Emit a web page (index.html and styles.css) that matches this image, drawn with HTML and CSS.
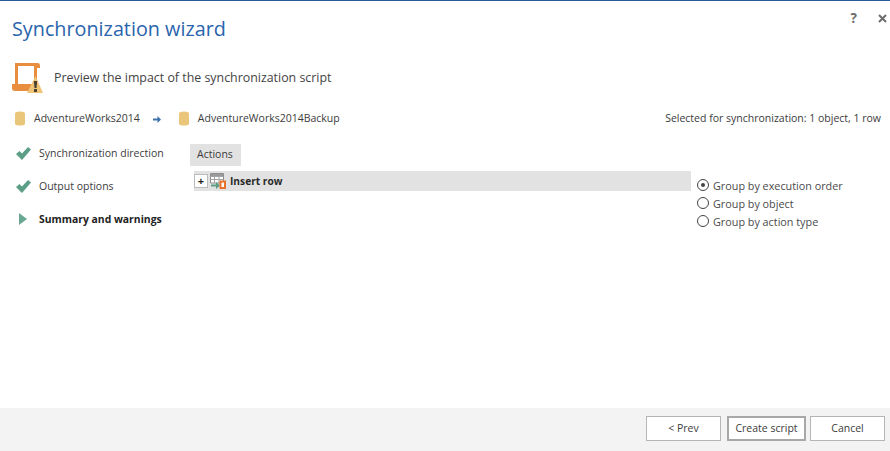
FILE: index.html
```
<!DOCTYPE html>
<html lang="en">
<head>
<meta charset="utf-8">
<title>Synchronization wizard</title>
<link rel="stylesheet" href="styles.css">
</head>
<body>
<div class="window">
  <header class="titlebar">
    <h1 class="title">Synchronization wizard</h1>
    <div class="winbtns">
      <span class="winbtn">?</span>
      <svg class="closeicon" width="9" height="9" viewBox="0 0 9 9"><path d="M1 1l7 7M8 1l-7 7" stroke="#6d6d6d" stroke-width="2" fill="none"/></svg>
    </div>
  </header>
  <div class="subtitle">
    <svg class="bigicon" width="31" height="30" viewBox="0 0 31 30">
      <path d="M4.500 23V1.500H23.500V23" fill="none" stroke="#e98d3e" stroke-width="3"/>
      <path d="M24 0h2q2 0 2 2.500V5h-4z" fill="#e98d3e"/>
      <path d="M0 21H22V28H3Q0 28 0 25z" fill="#e98d3e"/>
      <path d="M23.500 13L31 30H15z" fill="#eec477"/>
      <path d="M21.800 18h3.400l-.7 7h-2zM22 26h3v3h-3z" fill="#4a4033"/>
    </svg>
    <span>Preview the impact of the synchronization script</span>
  </div>
  <div class="dbrow">
    <div class="dbs">
      <svg class="db" width="10" height="15" viewBox="0 0 10 15"><path d="M0 2.500Q0 .5 5 .5T10 2.500V12.500Q10 14.500 5 14.500T0 12.500z" fill="#eac67a"/></svg>
      <span>AdventureWorks2014</span>
      <svg class="arrow" width="8" height="7" viewBox="0 0 8 7"><path d="M0 2.500H4.500V0L8 3.500 4.500 7V4.500H0z" fill="#3e72ad"/></svg>
      <svg class="db" width="10" height="15" viewBox="0 0 10 15"><path d="M0 2.500Q0 .5 5 .5T10 2.500V12.500Q10 14.500 5 14.500T0 12.500z" fill="#eac67a"/></svg>
      <span>AdventureWorks2014Backup</span>
    </div>
    <span>Selected for synchronization: 1 object, 1 row</span>
  </div>
  <main class="content">
    <nav class="steps">
      <div class="step">
        <svg class="check" width="15" height="13" viewBox="0 0 15 13"><path d="M0 7L3.500 4 6 6.500 12 0 15 2.500 6 13z" fill="#5c9f86"/></svg>
        <span>Synchronization direction</span>
      </div>
      <div class="step">
        <svg class="check" width="15" height="13" viewBox="0 0 15 13"><path d="M0 7L3.500 4 6 6.500 12 0 15 2.500 6 13z" fill="#5c9f86"/></svg>
        <span>Output options</span>
      </div>
      <div class="step current">
        <svg class="play" width="8" height="12" viewBox="0 0 8 12"><path d="M0 0L8 6 0 12z" fill="#6aa793"/></svg>
        <span>Summary and warnings</span>
      </div>
    </nav>
    <section class="actions">
      <div class="actionshead">Actions</div>
      <div class="grouprow">
        <span class="expander">+</span>
        <svg class="tableicon" width="16" height="16" viewBox="0 0 16 16">
          <path d="M.5 .5H13.500V10H.5z" fill="#fff" stroke="#8d8d8d"/>
          <path d="M.5 3.500H13.500M.5 6.500H13.500M4.500 .5V10M9 .5V10" stroke="#a5a5a5" fill="none"/>
          <path d="M1 1H13V3H1z" fill="#9a9a9a"/>
          <path d="M1 11.500H6V9L10 12.500 6 16V13.500H1z" fill="#5c9f86"/>
          <path d="M10.500 8.500H15V15H10.500z" fill="#fff" stroke="#e8732c" stroke-width="2"/>
        </svg>
        <span class="grouplabel">Insert row</span>
      </div>
    </section>
    <div class="radios">
      <label class="radio"><span class="dot checked"></span>Group by execution order</label>
      <label class="radio"><span class="dot"></span>Group by object</label>
      <label class="radio"><span class="dot"></span>Group by action type</label>
    </div>
  </main>
  <footer class="footer">
    <button class="btn">&lt; Prev</button>
    <button class="btn primary">Create script</button>
    <button class="btn last">Cancel</button>
  </footer>
</div>
</body>
</html>
```
FILE: styles.css
```
* { box-sizing: border-box; }
html, body { margin: 0; padding: 0; }
body {
  width: 890px;
  height: 451px;
  overflow: hidden;
  background: #fff;
  font-family: "Open Sans", "Noto Sans", sans-serif;
  font-size: 10.5px;
  color: #3c3c3c;
}
.window {
  height: 451px;
  display: flex;
  flex-direction: column;
  border-top: 1px solid #2a5a9a;
}
.titlebar {
  height: 53px;
  display: flex;
  justify-content: space-between;
  align-items: flex-start;
  padding: 11px 3px 0 12px;
}
.title {
  margin: 0;
  font-size: 19.8px;
  line-height: 33px;
  font-weight: 400;
  color: #2a64ad;
}
.winbtns {
  display: flex;
  align-items: center;
  gap: 21px;
}
.winbtn {
  font-size: 13.5px;
  line-height: 13px;
  font-weight: 700;
  color: #6d6d6d;
}
.subtitle {
  height: 33px;
  display: flex;
  align-items: center;
  gap: 11px;
  padding-left: 12px;
  margin-top: 7px;
  font-size: 12.4px;
  color: #444;
}
.bigicon { flex: none; }
.dbrow {
  height: 20px;
  margin-top: 14px;
  display: flex;
  align-items: center;
  justify-content: space-between;
  padding: 0 9px 0 15px;
}
.dbs { display: flex; align-items: center; }
.db + span { margin-left: 9px; }
.arrow { margin: 2px 18px 0 13px; }
.content {
  flex: 1;
  display: flex;
  padding-top: 16px;
}
.steps {
  width: 190px;
  flex: none;
  display: flex;
  flex-direction: column;
  padding: 1px 0 0 16px;
}
.step {
  height: 33px;
  display: flex;
  align-items: flex-start;
  line-height: 16px;
}
.step span { margin-left: 8px; }
.check { margin-top: 2px; }
.play { margin: 2px 0 0 3px; }
.step.current span { margin-left: 12px; }
.current { font-weight: 700; color: #222; font-size: 10.4px; }
.actions { width: 501px; flex: none; }
.actionshead {
  display: inline-block;
  height: 22px;
  width: 51px;
  padding-left: 7px;
  line-height: 20px;
  background: #e2e2e2;
  vertical-align: top;
}
.grouprow {
  height: 20px;
  margin: 5px 0 0 4px;
  background: #e2e2e2;
  display: flex;
  align-items: center;
  padding-left: 0;
}
.expander {
  width: 14px;
  height: 14px;
  background: #fff;
  border: 1px solid #bbb;
  font-size: 11px;
  font-weight: 700;
  line-height: 11px;
  text-align: center;
  color: #222;
}
.tableicon { margin-left: 2px; flex: none; }
.grouplabel {
  margin-left: 4px;
  font-weight: 700;
  font-size: 10.2px;
  color: #2a2a2a;
}
.radios {
  display: flex;
  flex-direction: column;
  padding: 32px 0 0 6px;
  font-size: 10.8px;
}
.radio {
  height: 18px;
  display: flex;
  align-items: center;
  color: #4a4a4a;
}
.dot {
  width: 12px;
  height: 12px;
  margin-right: 4px;
  border: 1px solid #444;
  border-radius: 50%;
  background: #fff;
  display: flex;
  align-items: center;
  justify-content: center;
}
.dot.checked::after {
  content: "";
  width: 4px;
  height: 4px;
  border-radius: 50%;
  background: #444;
}
.footer {
  height: 43px;
  background: #f3f3f3;
  display: flex;
  justify-content: flex-end;
  align-items: flex-start;
  gap: 6px;
  padding: 8px 5px 0 0;
}
.btn {
  width: 75px;
  height: 25px;
  border: 1px solid #b5b5b5;
  background: #fff;
  font: inherit;
  color: #3c3c3c;
  padding: 0 0 2px;
}
.primary {
  width: 79px;
  border: 2px solid #a8a8a8;
}
.last { margin-left: -2px; }
```
